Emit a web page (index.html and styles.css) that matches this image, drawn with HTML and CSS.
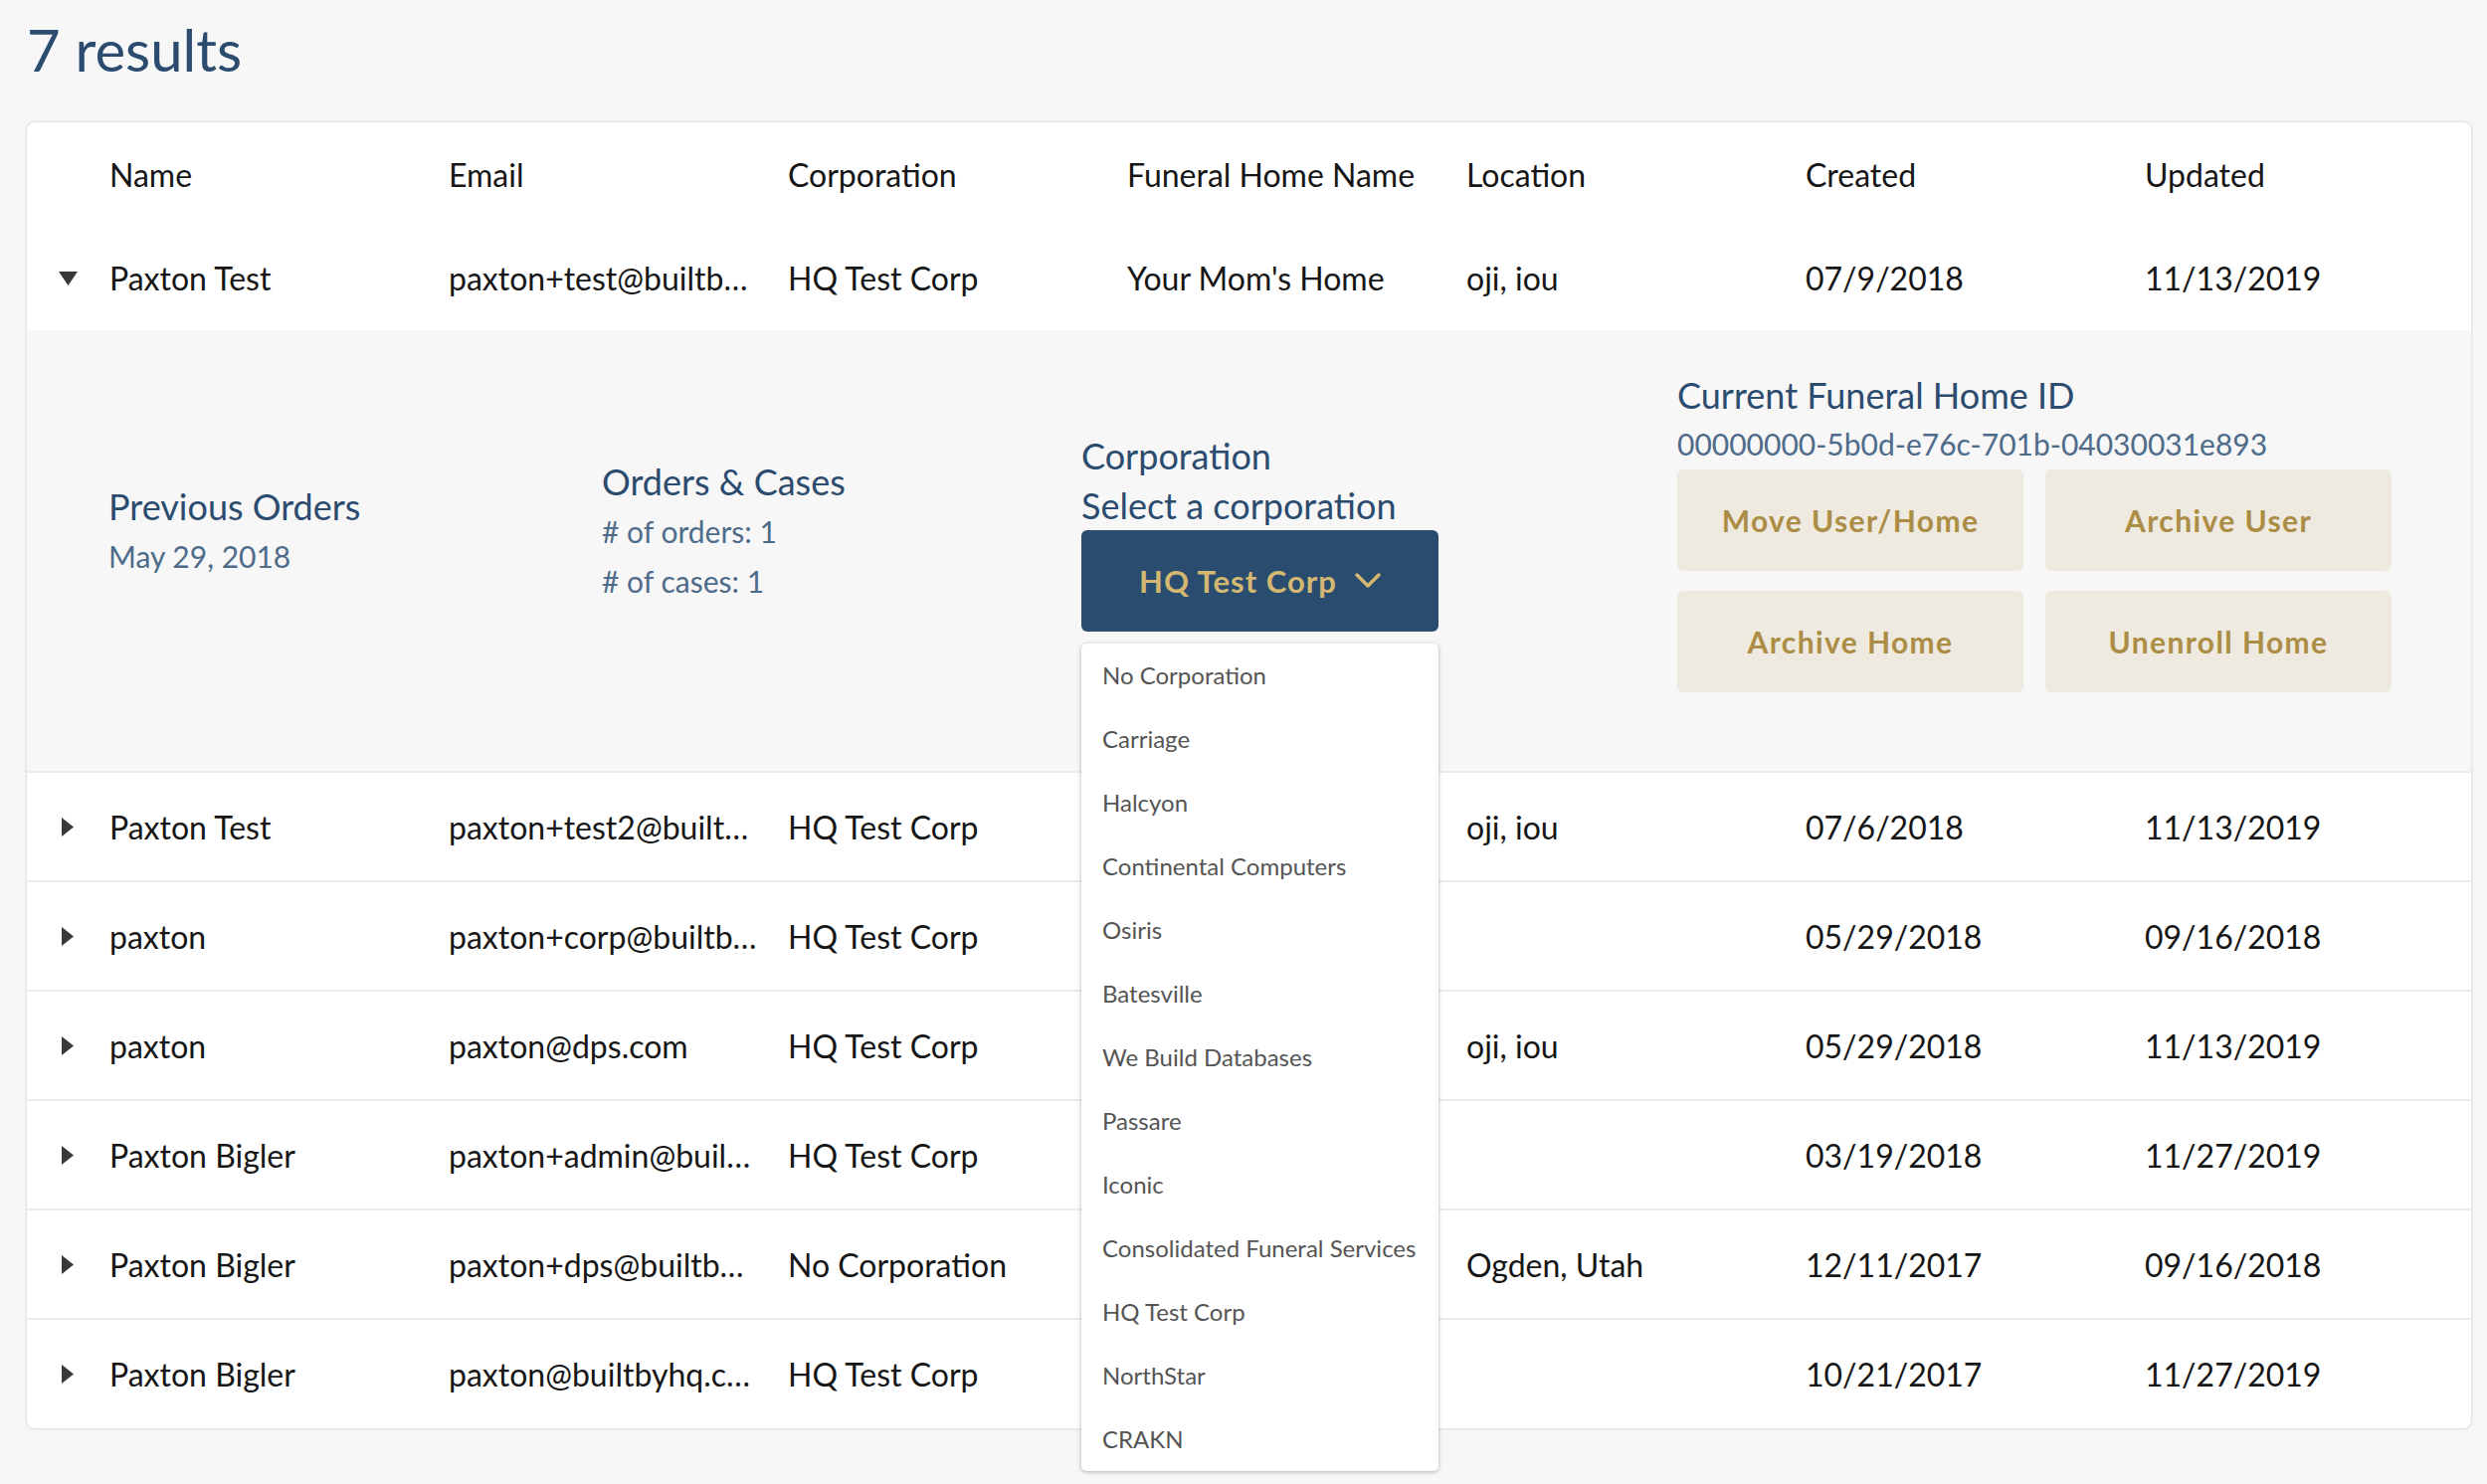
FILE: index.html
```html
<!DOCTYPE html>
<html lang="en">
<head>
<meta charset="utf-8">
<title>7 results</title>
<link rel="stylesheet" href="styles.css">
</head>
<body>
<div class="page">
  <h1 class="count">7 results</h1>
  <div class="card">
    <div class="row head">
      <div class="toggle"></div>
      <div class="cell">Name</div>
      <div class="cell">Email</div>
      <div class="cell">Corporation</div>
      <div class="cell">Funeral Home Name</div>
      <div class="cell">Location</div>
      <div class="cell">Created</div>
      <div class="cell">Updated</div>
    </div>

    <div class="row first">
      <div class="toggle"><svg class="tri-down" width="19" height="14" viewBox="0 0 19 14"><polygon points="0,0 19,0 9.5,14" fill="#383838"/></svg></div>
      <div class="cell">Paxton Test</div>
      <div class="cell">paxton+test@builtb…</div>
      <div class="cell">HQ Test Corp</div>
      <div class="cell">Your Mom's Home</div>
      <div class="cell">oji, iou</div>
      <div class="cell">07/9/2018</div>
      <div class="cell">11/13/2019</div>
    </div>

    <div class="detail">
      <div class="dcol">
        <div class="dtitle">Previous Orders</div>
        <div class="dtext">May 29, 2018</div>
      </div>
      <div class="dcol">
        <div class="dtitle">Orders &amp; Cases</div>
        <div class="dtext"># of orders: 1</div>
        <div class="dtext"># of cases: 1</div>
      </div>
      <div class="dcol">
        <div class="dtitle">Corporation</div>
        <div class="dtitle">Select a corporation</div>
        <div class="select-wrap">
          <button class="select-btn">HQ Test Corp
            <svg width="26" height="16" viewBox="0 0 26 16"><polyline points="2,2 13,13 24,2" fill="none" stroke="#d4b872" stroke-width="3.5" stroke-linecap="round" stroke-linejoin="round"/></svg>
          </button>
          <ul class="menu">
            <li>No Corporation</li>
            <li>Carriage</li>
            <li>Halcyon</li>
            <li>Continental Computers</li>
            <li>Osiris</li>
            <li>Batesville</li>
            <li>We Build Databases</li>
            <li>Passare</li>
            <li>Iconic</li>
            <li>Consolidated Funeral Services</li>
            <li>HQ Test Corp</li>
            <li>NorthStar</li>
            <li>CRAKN</li>
          </ul>
        </div>
      </div>
      <div class="dcol">
        <div class="dtitle">Current Funeral Home ID</div>
        <div class="dtext id">00000000-5b0d-e76c-701b-04030031e893</div>
        <div class="actions">
          <button class="action">Move User/Home</button>
          <button class="action">Archive User</button>
          <button class="action">Archive Home</button>
          <button class="action">Unenroll Home</button>
        </div>
      </div>
    </div>

    <div class="row">
      <div class="toggle"><svg class="tri-right" width="12" height="19" viewBox="0 0 12 19"><polygon points="0,0 12,9.5 0,19" fill="#383838"/></svg></div>
      <div class="cell">Paxton Test</div>
      <div class="cell">paxton+test2@built…</div>
      <div class="cell">HQ Test Corp</div>
      <div class="cell"></div>
      <div class="cell">oji, iou</div>
      <div class="cell">07/6/2018</div>
      <div class="cell">11/13/2019</div>
    </div>
    <div class="row">
      <div class="toggle"><svg class="tri-right" width="12" height="19" viewBox="0 0 12 19"><polygon points="0,0 12,9.5 0,19" fill="#383838"/></svg></div>
      <div class="cell">paxton</div>
      <div class="cell">paxton+corp@builtb…</div>
      <div class="cell">HQ Test Corp</div>
      <div class="cell"></div>
      <div class="cell"></div>
      <div class="cell">05/29/2018</div>
      <div class="cell">09/16/2018</div>
    </div>
    <div class="row">
      <div class="toggle"><svg class="tri-right" width="12" height="19" viewBox="0 0 12 19"><polygon points="0,0 12,9.5 0,19" fill="#383838"/></svg></div>
      <div class="cell">paxton</div>
      <div class="cell">paxton@dps.com</div>
      <div class="cell">HQ Test Corp</div>
      <div class="cell"></div>
      <div class="cell">oji, iou</div>
      <div class="cell">05/29/2018</div>
      <div class="cell">11/13/2019</div>
    </div>
    <div class="row">
      <div class="toggle"><svg class="tri-right" width="12" height="19" viewBox="0 0 12 19"><polygon points="0,0 12,9.5 0,19" fill="#383838"/></svg></div>
      <div class="cell">Paxton Bigler</div>
      <div class="cell">paxton+admin@buil…</div>
      <div class="cell">HQ Test Corp</div>
      <div class="cell"></div>
      <div class="cell"></div>
      <div class="cell">03/19/2018</div>
      <div class="cell">11/27/2019</div>
    </div>
    <div class="row">
      <div class="toggle"><svg class="tri-right" width="12" height="19" viewBox="0 0 12 19"><polygon points="0,0 12,9.5 0,19" fill="#383838"/></svg></div>
      <div class="cell">Paxton Bigler</div>
      <div class="cell">paxton+dps@builtb…</div>
      <div class="cell">No Corporation</div>
      <div class="cell"></div>
      <div class="cell">Ogden, Utah</div>
      <div class="cell">12/11/2017</div>
      <div class="cell">09/16/2018</div>
    </div>
    <div class="row last">
      <div class="toggle"><svg class="tri-right" width="12" height="19" viewBox="0 0 12 19"><polygon points="0,0 12,9.5 0,19" fill="#383838"/></svg></div>
      <div class="cell">Paxton Bigler</div>
      <div class="cell">paxton@builtbyhq.c…</div>
      <div class="cell">HQ Test Corp</div>
      <div class="cell"></div>
      <div class="cell"></div>
      <div class="cell">10/21/2017</div>
      <div class="cell">11/27/2019</div>
    </div>
  </div>
</div>
</body>
</html>
```
FILE: styles.css
```css
* { box-sizing: border-box; }
html, body { margin: 0; padding: 0; }
body {
  background: #f7f7f7;
  font-family: Lato, "Liberation Sans", sans-serif;
  width: 2500px;
  height: 1492px;
  overflow: hidden;
}
.page {
  padding: 0 16px 0 27px;
}
.count {
  margin: 0;
  padding-top: 21px;
  height: 123px;
  font-size: 58px;
  line-height: 58px;
  font-weight: 400;
  color: #2b4b6f;
}
.card {
  background: #fff;
  border-radius: 8px;
  box-shadow: 0 0 3px rgba(0, 0, 0, 0.22);
  position: relative;
}
.row {
  display: grid;
  grid-template-columns: 83px repeat(6, 341px) 1fr;
  align-items: center;
  height: 110px;
  border-bottom: 2px solid #ececec;
  font-size: 32px;
  color: #161616;
}
.row.head { height: 104px; border-bottom: none; }
.row.first { height: 105px; border-bottom: none; }
.row.last { border-bottom: none; height: 109px; }
.toggle {
  display: flex;
  align-items: center;
  height: 100%;
}
.tri-down { margin-left: 32px; }
.tri-right { margin-left: 35px; }
.cell {
  white-space: nowrap;
  overflow: hidden;
}

.detail {
  display: grid;
  grid-template-columns: 496px 482px 599px 1fr;
  align-items: center;
  height: 445px;
  padding: 0 0 40px 82px;
  background: #f7f7f7;
  border-bottom: 2px solid #ececec;
  position: relative;
  z-index: 2;
}
.dtitle {
  font-size: 36px;
  line-height: 50px;
  color: #2b4b6f;
  white-space: nowrap;
}
.dtext {
  font-size: 30px;
  line-height: 50px;
  color: #4e6b8a;
  white-space: nowrap;
}
.dtext.id { font-size: 30px; line-height: 48px; }
.select-wrap {
  position: relative;
  width: 359px;
}
.select-btn {
  display: flex;
  align-items: center;
  justify-content: center;
  gap: 18px;
  width: 359px;
  height: 102px;
  border: none;
  border-radius: 6px;
  background: #2a4d6f;
  color: #d4b872;
  font-family: Lato, "Liberation Sans", sans-serif;
  font-weight: 700;
  font-size: 31px;
  letter-spacing: 1px;
  padding: 0;
}
.menu {
  position: absolute;
  top: 114px;
  left: 0;
  width: 359px;
  margin: 0;
  padding: 0;
  list-style: none;
  background: #fff;
  border-radius: 5px;
  box-shadow: 0 1px 4px rgba(0, 0, 0, 0.3);
}
.menu li {
  height: 64px;
  line-height: 64px;
  padding-left: 21px;
  font-size: 24px;
  color: #555;
  white-space: nowrap;
}
.actions {
  display: grid;
  grid-template-columns: 348px 348px;
  column-gap: 22px;
  row-gap: 20px;
  margin-top: 2px;
}
.action {
  height: 102px;
  border: none;
  border-radius: 6px;
  background: #efeadf;
  color: #ac8d45;
  font-family: Lato, "Liberation Sans", sans-serif;
  font-weight: 700;
  font-size: 30px;
  letter-spacing: 1.4px;
  padding: 0;
}
```
